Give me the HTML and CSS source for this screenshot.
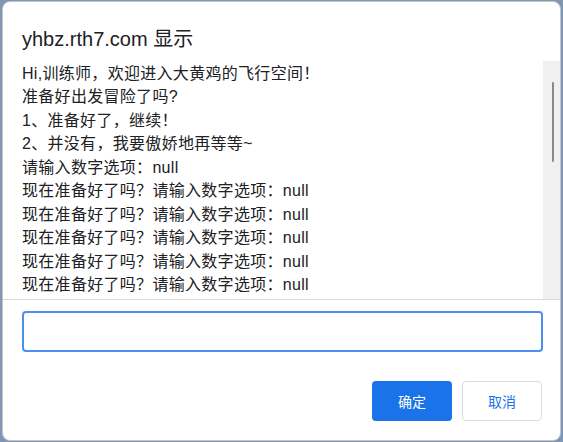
FILE: index.html
```html
<!DOCTYPE html>
<html>
<head>
  <meta charset="utf-8">
  <title>yhbz.rth7.com 显示</title>
  <link rel="stylesheet" href="styles.css">
</head>

<body>

<!-- prompt dialog -->
<div class="dialog">

  <div class="title">yhbz.rth7.com 显示</div>

  <!-- message with its scroll bar -->
  <div class="message">
    <div class="message-text">
      <div>Hi,训练师，欢迎进入大黄鸡的飞行空间！</div>
      <div>准备好出发冒险了吗?</div>
      <div>1、准备好了，继续！</div>
      <div>2、并没有，我要傲娇地再等等~</div>
      <div>请输入数字选项：null</div>
      <div>现在准备好了吗？请输入数字选项：null</div>
      <div>现在准备好了吗？请输入数字选项：null</div>
      <div>现在准备好了吗？请输入数字选项：null</div>
      <div>现在准备好了吗？请输入数字选项：null</div>
      <div>现在准备好了吗？请输入数字选项：null</div>
    </div>
    <div class="scrollbar"><div class="scrollbar-thumb"></div></div>
  </div>

  <!-- answer -->
  <div class="answer">
    <input type="text" class="answer-input">
  </div>

  <!-- buttons -->
  <div class="buttons">
    <button class="btn btn-ok">确定</button>
    <button class="btn btn-cancel">取消</button>
  </div>

</div>

</body>
</html>
```

FILE: styles.css
```css
body {
  margin: 0;
  background: #7f97b4;
  font-family: "Liberation Sans", "Noto Sans CJK SC", sans-serif;
  color: #202124;
}
.dialog {
  box-sizing: border-box;
  width: 559px;
  height: 440px;
  margin: 1px 2px 1px 2px;
  background: #fff;
  border: 1px solid #c4c4c4;
  border-radius: 8px;
  display: flex;
  flex-direction: column;
}
.title {
  padding: 25px 19px 0 19px;
  font-size: 20px;
  line-height: 24px;
  margin-bottom: 10px;
}
.message {
  display: flex;
  height: 238px;
  border-bottom: 1px solid #dadada;
}
.message-text {
  flex: 1;
  overflow: hidden;
  padding: 1px 0 0 19px;
  font-size: 16px;
  line-height: 23.45px;
  letter-spacing: 0.3px;
  white-space: nowrap;
}
.scrollbar {
  width: 17px;
  background: #f0f0f0;
}
.scrollbar-thumb {
  width: 2px;
  height: 80px;
  margin: 21px 0 0 9px;
  background: #8a8a8a;
  border-radius: 1px;
}
.answer {
  padding: 11px 17px 0 19px;
}
.answer-input {
  box-sizing: border-box;
  width: 100%;
  height: 41px;
  border: 2px solid #4d8ef3;
  border-radius: 4px;
  outline: none;
  font-size: 16px;
  padding: 0 8px;
}
.buttons {
  display: flex;
  justify-content: flex-end;
  gap: 10px;
  padding: 29px 18px 0 0;
}
.btn {
  box-sizing: border-box;
  width: 80px;
  height: 40px;
  border-radius: 4px;
  font-family: "Noto Sans CJK SC", sans-serif;
  font-size: 14px;
}
.btn-ok {
  background: #1a73e8;
  border: none;
  color: #fff;
}
.btn-cancel {
  background: #fff;
  border: 1px solid #dadce0;
  color: #1a73e8;
}
```
